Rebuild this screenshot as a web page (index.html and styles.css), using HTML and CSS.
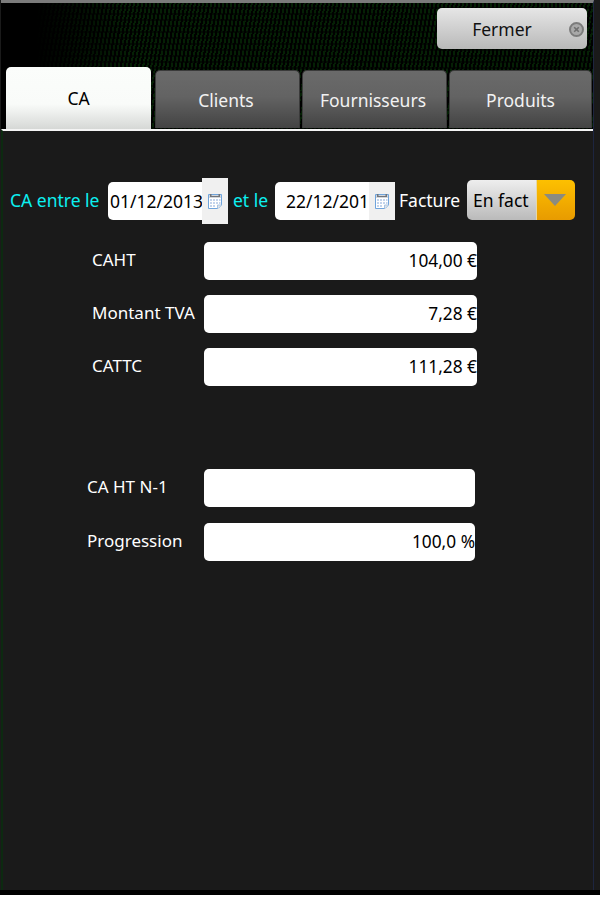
FILE: index.html
```html
<!DOCTYPE html>
<html>

<head>
  <meta charset="utf-8">
  <title>CA</title>
  <link rel="stylesheet" href="styles.css">
</head>

<body>
  <div class="screen">
    <div class="inner">
      <div class="header">
        <div class="topbar">
          <button class="close">Fermer
            <svg class="closeIcon" width="15" height="15" viewBox="0 0 15 15">
              <circle cx="7.5" cy="7.5" r="6.5" fill="#a9a9a9" stroke="#7c7c7c" stroke-width="2"/>
              <path d="M5.200 5.200l4.600 4.600M9.800 5.200l-4.600 4.600" stroke="#6f6f6f" stroke-width="1.600"/>
            </svg>
          </button>
        </div>

        <div class="tabs">
          <div class="tab active">CA</div>
          <div class="tab">Clients</div>
          <div class="tab">Fournisseurs</div>
          <div class="tab last">Produits</div>
        </div>
      </div>

      <div class="panel">
        <div class="filters">
          <span class="cyan first">CA entre le</span>
          <div class="date">
            <span class="dateVal">01/12/2013</span>
            <span class="calBtn tall">
              <svg width="14" height="16" viewBox="0 0 14 16"><use href="#cal"/></svg>
            </span>
          </div>
          <span class="cyan second">et le</span>
          <div class="date">
            <span class="dateVal indent">22/12/201</span>
            <span class="calBtn">
              <svg width="14" height="16" viewBox="0 0 14 16"><use href="#cal"/></svg>
            </span>
          </div>
          <span class="factLabel">Facture</span>
          <div class="select">
            <span class="selectVal">En fact</span>
            <span class="selectBtn"><i class="arrow"></i></span>
          </div>
        </div>

        <div class="rows">
          <div class="row"><label>CAHT</label><div class="field">104,00 €</div></div>
          <div class="row"><label>Montant TVA</label><div class="field">7,28 €</div></div>
          <div class="row"><label>CATTC</label><div class="field">111,28 €</div></div>
        </div>

        <div class="rows prev">
          <div class="row"><label>CA HT N-1</label><div class="field"></div></div>
          <div class="row"><label>Progression</label><div class="field">100,0 %</div></div>
        </div>
      </div>
    </div>
  </div>

  <svg class="defs" width="0" height="0">
    <symbol id="cal" viewBox="0 0 14 16">
      <path d="M.5 1.500h13v10.500l-3.500 3.500H.5z" fill="#fff" stroke="#6fa4dc"/>
      <rect x="1" y="2" width="12" height="3" fill="#d3d6da"/>
      <path d="M3 3.500h8" stroke="#70757c"/>
      <rect x="2" y="1" width="1.500" height="3" fill="#70757c"/>
      <rect x="10.500" y="1" width="1.500" height="3" fill="#70757c"/>
      <g fill="#c3d4ec">
        <rect x="2" y="6" width="2" height="2"/>
        <rect x="5" y="6" width="2" height="2"/>
        <rect x="8" y="6" width="2" height="2"/>
        <rect x="11" y="6" width="1.500" height="2"/>
        <rect x="2" y="9" width="2" height="2"/>
        <rect x="5" y="9" width="2" height="2"/>
        <rect x="8" y="9" width="2" height="2"/>
        <rect x="11" y="9" width="1.500" height="2"/>
        <rect x="2" y="12" width="2" height="2"/>
        <rect x="5" y="12" width="2" height="2"/>
      </g>
      <path d="M9.500 15.500v-3.500h4" fill="#dfe3e8" stroke="#a9c4e2"/>
    </symbol>
  </svg>
</body>

</html>
```

FILE: styles.css
```css
* {
  box-sizing: border-box;
}

html, body {
  margin: 0;
  background: #fff;
}

body {
  width: 608px;
  height: 904px;
  overflow: hidden;
  font-family: "Noto Sans", "Open Sans", sans-serif;
  font-size: 17.5px;
}

.defs {
  display: block;
}

.screen {
  width: 600px;
  height: 895px;
  background: #1a1a1a;
  border-bottom: 5px solid #000;
  padding-left: 1px;
}

.inner {
  width: 593px;
  height: 100%;
  border-top: 3px solid #7b7b7b;
  border-right: 1px solid #1d2540;
  display: flex;
  flex-direction: column;
}

.header {
  height: 126px;
  flex: none;
  background:
    linear-gradient(90deg, #000 6%, rgba(0, 0, 0, 0) 22%),
    repeating-linear-gradient(0deg, rgba(0, 0, 0, .55) 0, rgba(0, 0, 0, .55) 2px, rgba(0, 0, 0, 0) 2px, rgba(0, 0, 0, 0) 6px),
    repeating-linear-gradient(100deg, #000 0, #000 2px, #052005 2px, #052005 4px);
}

.topbar {
  height: 63px;
  display: flex;
  justify-content: flex-end;
  align-items: flex-start;
  padding: 5px 6px 0 0;
}

.close {
  width: 150px;
  height: 41px;
  border: 0;
  border-radius: 5px;
  background: linear-gradient(#e6e6e6, #b9b9b9);
  color: #111;
  font: inherit;
  padding: 0 20px 0 0;
  display: flex;
  align-items: center;
  justify-content: center;
  position: relative;
}

.closeIcon {
  position: absolute;
  right: 3px;
  top: 14px;
}

.tabs {
  height: 63px;
  display: flex;
  align-items: flex-start;
  gap: 2px;
  padding-left: 5px;
}

.tab {
  width: 145px;
  height: 58px;
  margin-top: 4px;
  padding-right: 3px;
  border-radius: 5px 5px 0 0;
  background: linear-gradient(#6a6a6a, #636363 45%, #434343);
  color: #f2f2f2;
  display: flex;
  align-items: center;
  justify-content: center;
  border: 1px solid #3a3a3a;
  border-bottom: 0;
}

.tab.active {
  height: 62px;
  margin-top: 1px;
  margin-right: 2px;
  padding-right: 0;
  border: 0;
  background: linear-gradient(#fbfdfb, #f9fbf9 60%, #d6d8d6);
  color: #000;
}

.tab.last {
  width: 143px;
  padding-right: 0;
}

.panel {
  flex: 1;
  border-top: 2px solid #f4f4f4;
  border-left: 2px solid #0c2a10;
  color: #fff;
}

.filters {
  height: 48px;
  margin-top: 46px;
  display: flex;
  align-items: center;
}

.cyan {
  color: #0cf0f0;
  margin-bottom: 2px;
}

.first {
  margin-left: 7px;
  width: 98px;
}

.second {
  margin-left: 5px;
  width: 42px;
}

.date {
  display: flex;
  align-items: center;
  width: 120px;
  height: 38px;
  background: #fff;
  border-radius: 5px 0 0 5px;
  color: #000;
}

.dateVal {
  flex: 1;
  padding-left: 2px;
  white-space: nowrap;
  overflow: hidden;
}

.dateVal.indent {
  padding-left: 11px;
}

.calBtn {
  width: 26px;
  height: 38px;
  background: #f0f0f0;
  display: flex;
  align-items: center;
  justify-content: center;
  flex: none;
}

.calBtn.tall {
  height: 46px;
}

.factLabel {
  margin-left: 4px;
  margin-bottom: 2px;
  width: 68px;
}

.select {
  display: flex;
  width: 108px;
  height: 40px;
  margin-bottom: 3px;
  border-radius: 5px;
  overflow: hidden;
}

.selectVal {
  width: 69px;
  background: linear-gradient(#eeeeee, #bababa);
  color: #000;
  padding-left: 6px;
  line-height: 40px;
  white-space: nowrap;
}

.selectBtn {
  flex: 1;
  background: linear-gradient(#fdc000, #e89b00);
  border-left: 1px solid #e6d8a8;
  display: flex;
  align-items: center;
  justify-content: center;
  padding-right: 3px;
}

.arrow {
  display: block;
  width: 0;
  height: 0;
  border-left: 11px solid transparent;
  border-right: 11px solid transparent;
  border-top: 12px solid #8b8b80;
}

.rows {
  display: flex;
  flex-direction: column;
  gap: 15.5px;
  margin-top: 17px;
  padding-left: 201px;
}

.row {
  display: flex;
  align-items: center;
  height: 37.5px;
  position: relative;
}

.row label {
  position: absolute;
  left: -112px;
  top: 6px;
  font-size: 17px;
  white-space: nowrap;
}

.field {
  width: 273px;
  height: 37.5px;
  background: #fff;
  border-radius: 5px;
  color: #000;
  font-size: 17.3px;
  text-align: right;
  line-height: 37px;
  overflow: hidden;
  white-space: nowrap;
}

.prev {
  gap: 16.5px;
  margin-top: 83.5px;
}

.prev .row label {
  left: -117px;
}

.prev .field {
  width: 271px;
}
```
